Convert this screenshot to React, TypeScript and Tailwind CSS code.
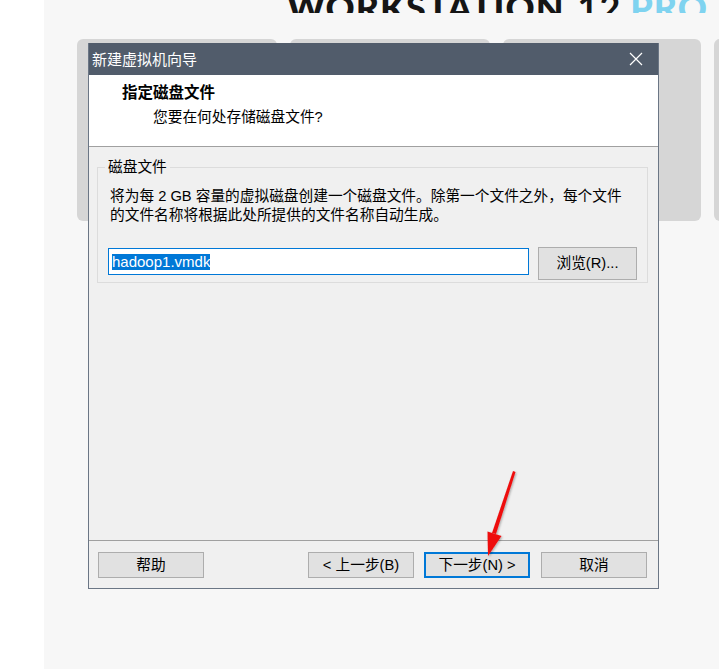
import React from "react";

const ui = { fontFamily: '"Liberation Sans", "Noto Sans CJK SC", sans-serif' };

function Btn({ children, primary = false }: { children: React.ReactNode; primary?: boolean }) {
  return (
    <div
      className={
        "w-[106px] h-[26px] flex items-center justify-center bg-[#e1e1e1] text-[14.7px] text-black leading-none " +
        (primary ? "border-2 border-[#0078d7]" : "border border-[#adadad]")
      }
    >
      {children}
    </div>
  );
}

export default function App() {
  return (
    <div className="relative w-[719px] h-[669px] overflow-hidden bg-[#f7f7f7] flex" style={ui}>
      <div className="w-[44px] h-full bg-white shrink-0" />
      <div className="flex-1 flex flex-col">
        <div className="h-[13px] overflow-hidden pl-[243px] shrink-0">
          <div
            className="-mt-[11px] flex items-baseline whitespace-nowrap text-[36px] leading-[36px] font-black tracking-[1px]"
            style={{ fontFamily: "Lato, sans-serif" }}
          >
            <span className="text-[#151515]">WORKSTATION</span>
            <span className="text-[#151515] ml-[13px] font-bold">12</span>
            <span className="text-[#7fd3f0] ml-[9px]">PRO</span>
          </div>
        </div>
        <div className="mt-[26px] ml-[33px] flex gap-[13px]">
          <div className="w-[200px] h-[182px] rounded-[6px] bg-[#d6d6d6] shrink-0" />
          <div className="w-[200px] h-[182px] rounded-[6px] bg-[#d6d6d6] shrink-0" />
          <div className="w-[198px] h-[182px] rounded-[6px] bg-[#d6d6d6] shrink-0" />
          <div className="w-[200px] h-[182px] rounded-[6px] bg-[#d6d6d6] shrink-0" />
        </div>
      </div>

      {/* dialog window */}
      <div className="absolute left-[88px] top-[43px] w-[571px] h-[546px] border-x border-b border-[#6b7685] bg-[#f0f0f0] flex flex-col">
        <div className="h-[32px] bg-[#515c6b] flex items-center justify-between pl-[3px] pr-[15px] shrink-0">
          <span className="text-white text-[15px] leading-none">新建虚拟机向导</span>
          <svg width="14" height="14" viewBox="0 0 14 14">
            <path d="M1 1 L13 13 M13 1 L1 13" stroke="#ffffff" strokeWidth="1.2" />
          </svg>
        </div>
        <div className="h-[72px] bg-white border-b border-[#a0a0a0] shrink-0 pt-[8px]">
          <div className="pl-[33px] text-[15.5px] font-bold leading-[20px] text-black">指定磁盘文件</div>
          <div className="pl-[64px] mt-[4px] text-[14.7px] leading-[20px] text-black">您要在何处存储磁盘文件?</div>
        </div>
        <div className="flex-1 pl-[8px] pr-[11px] pt-[11px]">
          <fieldset className="border border-[#dcdcdc] pl-[12px] pr-[10px] pb-[2px]">
            <legend className="ml-[-5px] px-[3px] text-[14.7px] leading-[19px] text-black">磁盘文件</legend>
            <div className="mt-[10px] text-[14.7px] leading-[19px] text-black whitespace-nowrap">
              <div>将为每 2 GB 容量的虚拟磁盘创建一个磁盘文件。除第一个文件之外，每个文件</div>
              <div>的文件名称将根据此处所提供的文件名称自动生成。</div>
            </div>
            <div className="mt-[22px] flex items-start">
              <div className="ml-[-2px] w-[421px] h-[27px] mt-[1px] border border-[#0078d7] bg-white flex items-center pl-[3px]">
                <span className="bg-[#0078d7] text-white text-[15px] leading-[16px]">hadoop1.vmdk</span>
              </div>
              <div className="ml-[9px] w-[99px] h-[33px] bg-[#e1e1e1] border border-[#adadad] flex items-center justify-center text-[14.7px] text-black">
                浏览(R)...
              </div>
            </div>
          </fieldset>
        </div>
        <div className="h-[48px] border-t border-[#a0a0a0] shrink-0 flex items-start pt-[11px] pl-[9px] pr-[11px]">
          <Btn>帮助</Btn>
          <div className="ml-auto flex gap-[10px]">
            <Btn>&lt; 上一步(B)</Btn>
            <Btn primary>下一步(N) &gt;</Btn>
            <div className="ml-px">
              <Btn>取消</Btn>
            </div>
          </div>
        </div>
      </div>

      {/* red annotation arrow */}
      <svg className="absolute left-0 top-0 pointer-events-none" width="719" height="669">
        <defs>
          <filter id="sh" x="-50%" y="-50%" width="200%" height="200%">
            <feDropShadow dx="1" dy="1" stdDeviation="1.2" floodColor="#000" floodOpacity="0.3" />
          </filter>
        </defs>
        <g filter="url(#sh)" fill="#ee1111">
          <polygon points="513,471 515.5,472 496,534 492,533" />
          <polygon points="488,556 487.5,531.5 501.5,536" />
        </g>
      </svg>
    </div>
  );
}
